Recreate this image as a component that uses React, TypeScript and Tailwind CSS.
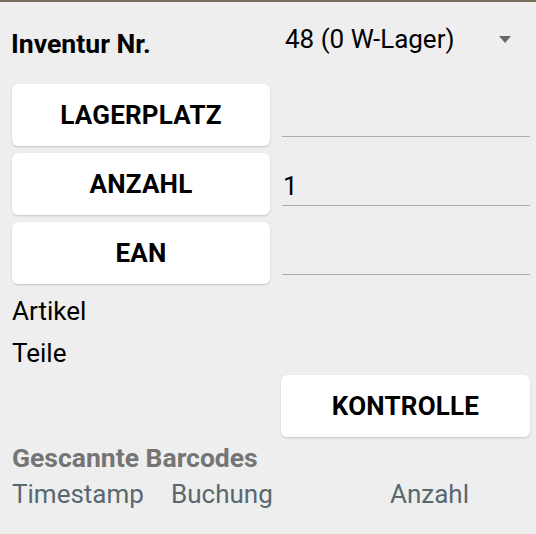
import React from 'react';

function ScanButton({ label }: { label: string }) {
  return (
    <button className="h-[62px] w-full rounded-[6px] bg-white shadow-[0_1px_2px_rgba(0,0,0,0.18)] flex items-center justify-center text-[26px] font-bold leading-none tracking-[0.2px]">
      {label}
    </button>
  );
}

function Field({ value }: { value?: string }) {
  return (
    <div className="h-[53px] border-b border-[#ababab] pt-[18px] pl-[1px] text-[26px] leading-[30px]">
      {value}
    </div>
  );
}

export default function App() {
  const rows = [
    { label: 'LAGERPLATZ', value: '' },
    { label: 'ANZAHL', value: '1' },
    { label: 'EAN', value: '' },
  ];

  return (
    <div className="min-h-screen bg-[#eeeeee] font-['Roboto','Liberation_Sans',sans-serif] text-black">
      <div className="h-[2px] bg-[#7a6f5d]" />
      <div className="pl-[12px] pr-[6px]">
        {/* inventur select */}
        <div className="grid grid-cols-[258px_248px] gap-x-[12px] h-[82px]">
          <div className="pt-[27px] text-[26.6px] font-bold leading-[30px] -ml-px">Inventur Nr.</div>
          <div className="flex items-start pt-[22px] pl-[3px]">
            <span className="text-[26px] leading-[30px]">48 (0 W-Lager)</span>
            <svg className="ml-auto mr-[19px] mt-[12px]" width="12" height="7" viewBox="0 0 12 7">
              <path d="M0 0h12L6 7z" fill="#676767" />
            </svg>
          </div>
        </div>

        {/* scan rows */}
        <div className="flex flex-col gap-[7px]">
          {rows.map((r) => (
            <div key={r.label} className="grid grid-cols-[258px_248px] gap-x-[12px]">
              <ScanButton label={r.label} />
              <Field value={r.value} />
            </div>
          ))}
        </div>

        <div className="mt-[12px] text-[26px] leading-[30px]">Artikel</div>
        <div className="mt-[12px] text-[26px] leading-[30px]">Teile</div>

        <div className="mt-[7px] grid grid-cols-[258px_248px] gap-x-[12px]">
          <div className="col-start-2 -ml-px">
            <ScanButton label="KONTROLLE" />
          </div>
        </div>

        <div className="mt-[6px] text-[26.5px] font-bold leading-[30px] text-[#757575]">Gescannte Barcodes</div>
        <div className="mt-[6px] flex text-[26px] leading-[30px] text-[#59686f]">
          <span className="w-[159px]">Timestamp</span>
          <span className="w-[219px]">Buchung</span>
          <span>Anzahl</span>
        </div>
      </div>
    </div>
  );
}
